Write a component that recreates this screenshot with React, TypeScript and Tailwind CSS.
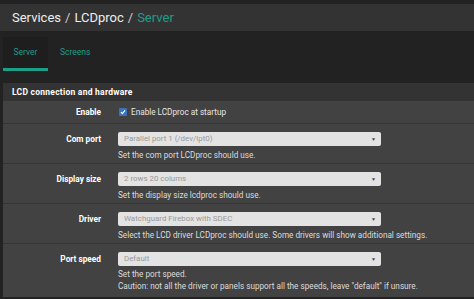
import React from 'react';

const rows = [
  { label: 'Com port', value: 'Parallel port 1 (/dev/lpt0)', help: ['Set the com port LCDproc should use.'] },
  { label: 'Display size', value: '2 rows 20 colums', help: ['Set the display size lcdproc should use.'] },
  {
    label: 'Driver',
    value: 'Watchguard Firebox with SDEC',
    help: ['Select the LCD driver LCDproc should use. Some drivers will show additional settings.'],
  },
  {
    label: 'Port speed',
    value: 'Default',
    help: ['Set the port speed.', 'Caution: not all the driver or panels support all the speeds, leave "default" if unsure.'],
  },
];

const Select = ({ value }: { value: string }) => (
  <div className="flex items-center justify-between w-[263px] h-[14px] rounded-[2px] bg-[#e3e3e3] pl-[6px] pr-[5px]">
    <span className="text-[7.9px] text-[#999] leading-none">{value}</span>
    <span className="text-[5px] text-[#444] leading-none">▼</span>
  </div>
);

export default function App() {
  return (
    <div className="w-[474px] h-[299px] overflow-hidden bg-[#222] pt-[4px] font-['Roboto',sans-serif]">
      <div className="h-[27px] bg-[#333] flex items-center px-[12px] text-[13px] text-[#eee]">
        <span>Services</span>
        <span className="mx-[4px] text-[#ccc]">/</span>
        <span>LCDproc</span>
        <span className="mx-[4px] text-[#ccc]">/</span>
        <span className="text-[#1e9c89]">Server</span>
      </div>

      <div className="flex mt-[6px] ml-[3px] h-[34px] text-[8.5px]">
        <div className="w-[45px] flex flex-col bg-[#1e1e1e]">
          <div className="flex-1 flex items-center justify-center text-[#1e9c89]">Server</div>
          <div className="h-[3px] bg-[#1aa088]" />
        </div>
        <div className="px-[12px] flex items-center pb-[3px] text-[#1e9c89]">Screens</div>
      </div>

      <div className="ml-[3px] mt-[12px]">
        <div className="h-[18px] bg-[#333] flex items-center pl-[9px] text-[8.5px] font-bold text-white tracking-[0.25px]">
          LCD connection and hardware
        </div>
        <div className="bg-[#424242]">
          <div className="h-[23px] flex items-center border-b border-[#353535]">
            <div className="w-[98px] text-right text-[8.3px] font-bold text-white">Enable</div>
            <div className="ml-[18px] flex items-center">
              <span className="w-[8px] h-[8px] rounded-[1px] bg-[#3b73b9] flex items-center justify-center">
                <svg width="6" height="6" viewBox="0 0 6 6">
                  <path d="M1 3.2 L2.4 4.6 L5 1.4" stroke="white" strokeWidth="1.2" fill="none" />
                </svg>
              </span>
              <span className="ml-[4px] text-[8.2px] text-[#e6e6e6]">Enable LCDproc at startup</span>
            </div>
          </div>
          {rows.map((r, i) => (
            <div
              key={r.label}
              className={`flex pt-[8px] ${i < rows.length - 1 ? 'border-b border-[#353535] pb-[2px]' : 'pb-[5px]'}`}
            >
              <div className="w-[98px] h-[14px] flex items-center justify-end text-[8.3px] font-bold text-white">
                {r.label}
              </div>
              <div className="ml-[17px]">
                <Select value={r.value} />
                <div className={i === 3 ? 'mt-[2px]' : 'mt-[3px]'}>
                  {r.help.map((h) => (
                    <div key={h} className="text-[8.2px] leading-[12px] text-[#dcdcdc] whitespace-nowrap">
                      {h}
                    </div>
                  ))}
                </div>
              </div>
            </div>
          ))}
        </div>
      </div>
    </div>
  );
}
